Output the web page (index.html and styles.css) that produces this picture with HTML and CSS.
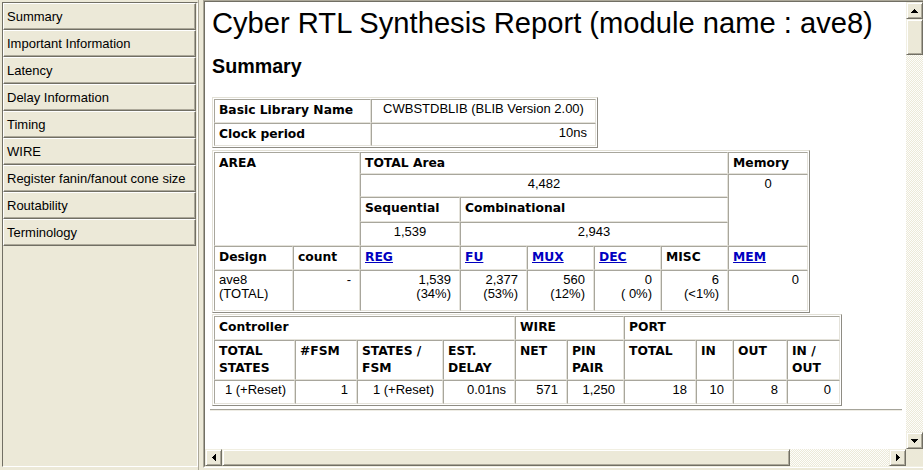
FILE: index.html
```html
<!DOCTYPE html>
<html>
<head>
<meta charset="utf-8">
<title>Cyber RTL Synthesis Report</title>
<link rel="stylesheet" href="styles.css">
</head>
<body>
<div class="app">
  <nav class="nav">
    <div class="nav-in">
      <div class="nav-btn">Summary</div>
      <div class="nav-btn">Important Information</div>
      <div class="nav-btn">Latency</div>
      <div class="nav-btn">Delay Information</div>
      <div class="nav-btn">Timing</div>
      <div class="nav-btn">WIRE</div>
      <div class="nav-btn">Register fanin/fanout cone size</div>
      <div class="nav-btn">Routability</div>
      <div class="nav-btn">Terminology</div>
    </div>
  </nav>
  <div class="split"></div>
  <div class="frame">
    <div class="frame-in">
      <div class="page">
        <h1 class="title">Cyber RTL Synthesis Report (module name : ave8)</h1>
        <h2 class="subtitle">Summary</h2>

        <table class="rt t1">
          <colgroup><col class="w157"><col class="w225"></colgroup>
          <tr class="h24"><th>Basic Library Name</th><td class="c">CWBSTDBLIB (BLIB Version 2.00)</td></tr>
          <tr class="h23"><th>Clock period</th><td class="r">10ns</td></tr>
        </table>

        <table class="rt t2">
          <colgroup><col class="w79"><col class="w67"><col class="w100"><col class="w67"><col class="w67"><col class="w67"><col class="w67"><col class="w80"></colgroup>
          <tr class="h22"><th colspan="2" rowspan="4">AREA</th><th colspan="5">TOTAL Area</th><th>Memory</th></tr>
          <tr class="h23"><td colspan="5" class="c">4,482</td><td rowspan="3" class="c">0</td></tr>
          <tr class="h25"><th>Sequential</th><th colspan="4">Combinational</th></tr>
          <tr class="h24"><td class="c">1,539</td><td colspan="4" class="c">2,943</td></tr>
          <tr class="h24"><th>Design</th><th>count</th><th><a href="#">REG</a></th><th><a href="#">FU</a></th><th><a href="#">MUX</a></th><th><a href="#">DEC</a></th><th>MISC</th><th><a href="#">MEM</a></th></tr>
          <tr class="h41"><td class="l">ave8<br>(TOTAL)</td><td class="r">-</td><td class="r">1,539<br>(34%)</td><td class="r">2,377<br>(53%)</td><td class="r">560<br>(12%)</td><td class="r">0<br>(&nbsp;0%)</td><td class="r">6<br>(&lt;1%)</td><td class="r">0</td></tr>
        </table>

        <table class="rt t3">
          <colgroup><col class="w81"><col class="w62"><col class="w86"><col class="w72"><col class="w52"><col class="w57"><col class="w72"><col class="w37"><col class="w54"><col class="w53"></colgroup>
          <tr class="h24"><th colspan="4">Controller</th><th colspan="2">WIRE</th><th colspan="4">PORT</th></tr>
          <tr class="h40"><th>TOTAL<br>STATES</th><th>#FSM</th><th>STATES /<br>FSM</th><th>EST.<br>DELAY</th><th>NET</th><th>PIN<br>PAIR</th><th>TOTAL</th><th>IN</th><th>OUT</th><th>IN /<br>OUT</th></tr>
          <tr class="h24"><td class="r">1 (+Reset)</td><td class="r">1</td><td class="r">1 (+Reset)</td><td class="r">0.01ns</td><td class="r">571</td><td class="r">1,250</td><td class="r">18</td><td class="r">10</td><td class="r">8</td><td class="r">0</td></tr>
        </table>

        <hr class="rule">
      </div>

      <div class="vscroll">
        <div class="sb-btn"><svg width="7" height="4" viewBox="0 0 7 4"><path d="M3 0h1v1h1v1h1v1h1v1H0V3h1V2h1V1h1z"/></svg></div>
        <div class="sb-thumb vthumb"></div>
        <div class="sb-track"></div>
        <div class="sb-btn"><svg width="7" height="4" viewBox="0 0 7 4"><path d="M0 0h7v1h-1v1h-1v1h-1v1h-1v-1h-1v-1h-1v-1h-1z"/></svg></div>
      </div>

      <div class="hscroll">
        <div class="sb-btn"><svg width="4" height="7" viewBox="0 0 4 7"><path d="M0 3h1v-1h1v-1h1v-1h1v7h-1v-1h-1v-1h-1v-1h-1z"/></svg></div>
        <div class="sb-thumb hthumb"></div>
        <div class="sb-track"></div>
        <div class="sb-btn"><svg width="4" height="7" viewBox="0 0 4 7"><path d="M4 3h-1v-1h-1v-1h-1v-1h-1v7h1v-1h1v-1h1v-1h1z"/></svg></div>
      </div>

      <div class="corner"></div>
    </div>
  </div>
</div>
</body>
</html>
```

FILE: styles.css
```css
* { box-sizing: border-box; }
html, body { margin: 0; padding: 0; }
body {
  background: #ece9d8;
  width: 923px;
  height: 470px;
  overflow: hidden;
  font-family: "Liberation Sans", Arial, sans-serif;
  font-size: 13px;
  color: #000;
}
.app { display: flex; height: 470px; }

/* left navigation */
.nav { flex: none; width: 198px; height: 470px; padding: 2px 0 3px 2px; }
.nav-in {
  height: 100%;
  border-left: 1px solid #716f64;
  border-top: 1px solid #716f64;
  border-right: 1px solid #fff;
  border-bottom: 1px solid #fff;
}
.nav-btn {
  width: 193px;
  height: 27px;
  border: 1px solid;
  border-color: #fff #716f64 #716f64 #fff;
  box-shadow: inset -1px -1px 0 #aca899;
  padding-left: 3px;
  line-height: 25px;
  white-space: nowrap;
  overflow: hidden;
}

.split { flex: none; width: 5px; border-left: 1px solid #aca899; }

/* content frame */
.frame {
  flex: none;
  width: 722px;
  height: 468px;
  border: 1px solid;
  border-color: #aca899 #fff #fff #aca899;
}
.frame-in {
  height: 100%;
  border: 1px solid;
  border-color: #716f64 #f1efe2 #f1efe2 #716f64;
  display: grid;
  grid-template-columns: 701px 17px;
  grid-template-rows: 447px 17px;
}
.page {
  background: #fff;
  overflow: hidden;
  padding: 0 4px 0 7px;
}
.title {
  margin: 5px 0 0;
  font-size: 29.15px;
  font-weight: normal;
  line-height: 33px;
  white-space: nowrap;
}
.subtitle {
  margin: 15px 0 0;
  font-size: 19.7px;
  font-weight: bold;
  line-height: 22px;
}

/* report tables */
.rt {
  border-collapse: separate;
  border-spacing: 0;
  table-layout: fixed;
  border: 1px solid;
  border-color: #e2e0d6 #8e8c84 #8e8c84 #e2e0d6;
  padding: 1px;
}
.t1 { margin-top: 20px; width: 386px; }
.t2 { margin-top: 2px; width: 598px; }
.t3 { margin-top: 1px; width: 630px; }
.rt th, .rt td {
  border: 1px solid;
  border-color: #a8a69c #e4e2da #e4e2da #a8a69c;
  vertical-align: top;
  white-space: nowrap;
  overflow: hidden;
}
.rt th {
  font-family: "DejaVu Sans", Verdana, sans-serif;
  font-size: 12.3px;
  font-weight: bold;
  text-align: left;
  line-height: 17px;
  padding: 2px 4px 0 4px;
}
.rt td {
  font-weight: normal;
  line-height: 14px;
  padding: 2px 8px 0 4px;
}
.rt td.c { text-align: center; padding-left: 4px; padding-right: 4px; }
.rt td.r { text-align: right; }
.rt td.l { text-align: left; }
.rt a { color: #0000c0; text-decoration: underline; }

.w37 { width: 37px; } .w52 { width: 52px; } .w53 { width: 53px; } .w54 { width: 54px; }
.w57 { width: 57px; } .w62 { width: 62px; } .w67 { width: 67px; } .w72 { width: 72px; }
.w79 { width: 79px; } .w80 { width: 80px; } .w81 { width: 81px; } .w86 { width: 86px; }
.w100 { width: 100px; } .w157 { width: 157px; } .w225 { width: 225px; }
.h22 { height: 22px; } .h23 { height: 23px; } .h24 { height: 24px; } .h25 { height: 25px; }
.h40 { height: 40px; } .h41 { height: 41px; }

.rule {
  margin: 3px 0 0 -2px;
  height: 0;
  border: 0;
  border-top: 1px solid #a6a49a;
  border-bottom: 1px solid #eeece4;
}

/* scrollbars */
.vscroll, .hscroll {
  display: flex;
  background-color: #fff;
  background-image: repeating-conic-gradient(#ece9d8 0 25%, #fdfdfb 0 50%);
  background-size: 2px 2px;
}
.vscroll { flex-direction: column; }
.sb-btn, .sb-thumb {
  flex: none;
  background: #ece9d8;
  border: 1px solid;
  border-color: #f1efe2 #716f64 #716f64 #f1efe2;
  box-shadow: inset 1px 1px 0 #fff, inset -1px -1px 0 #aca899;
}
.sb-btn {
  width: 17px;
  height: 17px;
  display: flex;
  align-items: center;
  justify-content: center;
}
.sb-btn svg { display: block; fill: #000; shape-rendering: crispEdges; }
.vthumb { width: 17px; height: 36px; }
.hthumb { height: 17px; width: 568px; }
.sb-track { flex: 1; }
.corner { background: #ece9d8; }
```
